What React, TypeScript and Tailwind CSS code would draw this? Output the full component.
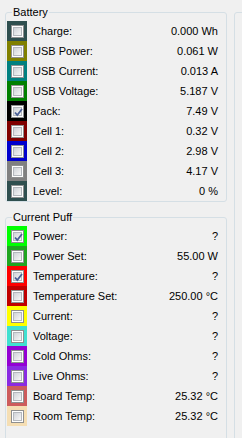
import React from 'react'

type Row = { label: string; value: string; color: string; checked?: boolean }

const battery: Row[] = [
    { label: 'Charge:', value: '0.000 Wh', color: 'bg-[#2f4f4f]' },
    { label: 'USB Power:', value: '0.061 W', color: 'bg-[#808000]' },
    { label: 'USB Current:', value: '0.013 A', color: 'bg-[#008080]' },
    { label: 'USB Voltage:', value: '5.187 V', color: 'bg-[#008000]' },
    { label: 'Pack:', value: '7.49 V', color: 'bg-[#000000]', checked: true },
    { label: 'Cell 1:', value: '0.32 V', color: 'bg-[#800000]' },
    { label: 'Cell 2:', value: '2.98 V', color: 'bg-[#0000cd]' },
    { label: 'Cell 3:', value: '4.17 V', color: 'bg-[#808080]' },
    { label: 'Level:', value: '0 %', color: 'bg-[#2f4f4f]' },
]

const puff: Row[] = [
    { label: 'Power:', value: '?', color: 'bg-[#00ff00]', checked: true },
    { label: 'Power Set:', value: '55.00 W', color: 'bg-[#20a520]' },
    { label: 'Temperature:', value: '?', color: 'bg-[#ff0000]', checked: true },
    { label: 'Temperature Set:', value: '250.00 °C', color: 'bg-[#c00000]' },
    { label: 'Current:', value: '?', color: 'bg-[#ffff00]' },
    { label: 'Voltage:', value: '?', color: 'bg-[#40e0d0]' },
    { label: 'Cold Ohms:', value: '?', color: 'bg-[#9400d3]' },
    { label: 'Live Ohms:', value: '?', color: 'bg-[#8a2be2]' },
    { label: 'Board Temp:', value: '25.32 °C', color: 'bg-[#cd5c5c]' },
    { label: 'Room Temp:', value: '25.32 °C', color: 'bg-[#f5deb3]' },
]

function CheckBox({ checked }: { checked?: boolean }) {
    return (
        <div className="relative w-[13px] h-[13px] border border-[#8e8f8f] bg-white p-[1px]">
            <div className="w-full h-full border border-[#b4b8bd] bg-gradient-to-br from-[#d0d3d8] to-[#f7f7f7]" />
            {checked && (
                <svg className="absolute inset-0" width="13" height="13" viewBox="0 0 13 13">
                    <path d="M3 6.5 L5.3 9 L10 3" fill="none" stroke="#4a5f97" strokeWidth="1.8" />
                </svg>
            )}
        </div>
    )
}

function GroupBox({ title, rows, extra }: { title: string; rows: Row[]; extra?: string }) {
    return (
        <div className={`relative border border-[#d5dfe5] rounded-[3px] pt-[8px] px-[1px] ${extra ?? ''}`}>
            <span className="absolute top-[-7px] left-[6px] px-[1px] bg-[#f0f0f0] leading-[13px]">{title}</span>
            {rows.map((r) => (
                <div key={r.label} className="h-[20px] flex items-center">
                    <div className={`w-[20px] h-full flex items-center justify-center ${r.color}`}>
                        <CheckBox checked={r.checked} />
                    </div>
                    <span className="ml-[6px] leading-[13px]">{r.label}</span>
                    <span className="ml-auto pr-[7px] leading-[13px]">{r.value}</span>
                </div>
            ))}
        </div>
    )
}

export default function App() {
    return (
        <div
            className="w-[242px] h-[438px] overflow-hidden bg-[#f0f0f0] flex pl-[5px] pt-[12px] gap-[7px] text-[11px] text-black"
            style={{ fontFamily: '"Liberation Sans", Arial, sans-serif' }}
        >
            <div className="w-[222px] shrink-0 flex flex-col gap-[15px]">
                <GroupBox title="Battery" rows={battery} />
                <GroupBox title="Current Puff" rows={puff} extra="pb-[20px]" />
            </div>
            <div className="w-[20px] shrink-0 h-[460px] border border-[#d5dfe5] rounded-[3px]" />
        </div>
    )
}
